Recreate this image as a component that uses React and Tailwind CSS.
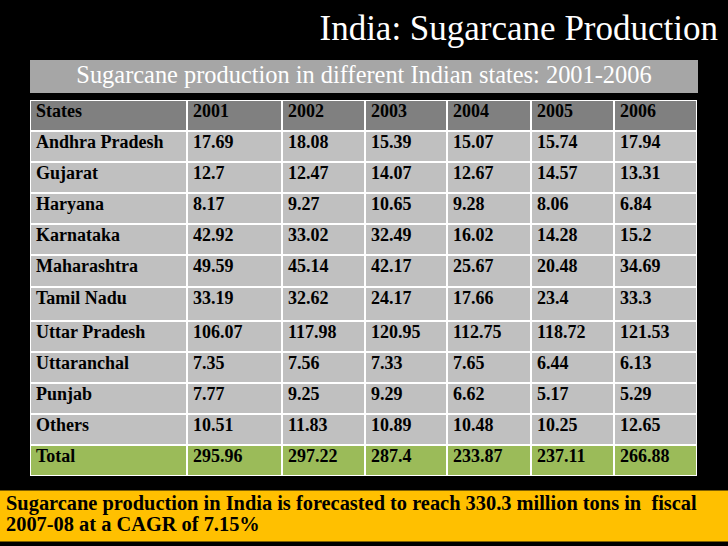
import React from 'react';

const header = ['States', '2001', '2002', '2003', '2004', '2005', '2006'];

const rows = [
  { cells: ['Andhra Pradesh', '17.69', '18.08', '15.39', '15.07', '15.74', '17.94'], h: 'h-[29px]' },
  { cells: ['Gujarat', '12.7', '12.47', '14.07', '12.67', '14.57', '13.31'], h: 'h-[29px]' },
  { cells: ['Haryana', '8.17', '9.27', '10.65', '9.28', '8.06', '6.84'], h: 'h-[29px]' },
  { cells: ['Karnataka', '42.92', '33.02', '32.49', '16.02', '14.28', '15.2'], h: 'h-[29px]' },
  { cells: ['Maharashtra', '49.59', '45.14', '42.17', '25.67', '20.48', '34.69'], h: 'h-[30px]' },
  { cells: ['Tamil Nadu', '33.19', '32.62', '24.17', '17.66', '23.4', '33.3'], h: 'h-[32px]' },
  { cells: ['Uttar Pradesh', '106.07', '117.98', '120.95', '112.75', '118.72', '121.53'], h: 'h-[29px]' },
  { cells: ['Uttaranchal', '7.35', '7.56', '7.33', '7.65', '6.44', '6.13'], h: 'h-[29px]' },
  { cells: ['Punjab', '7.77', '9.25', '9.29', '6.62', '5.17', '5.29'], h: 'h-[29px]' },
  { cells: ['Others', '10.51', '11.83', '10.89', '10.48', '10.25', '12.65'], h: 'h-[29px]' },
];

const total = ['Total', '295.96', '297.22', '287.4', '233.87', '237.11', '266.88'];

const Row = ({ cells, bg, h }) => (
  <div className={`grid grid-cols-[155px_93px_81px_80px_82px_81px_81px] gap-[2px] ${h}`}>
    {cells.map((c, i) => (
      <div key={i} className={`${bg} pl-[5px] pt-[1px] text-[18px] leading-[18px] font-bold text-black whitespace-nowrap`}>
        {c}
      </div>
    ))}
  </div>
);

export default function App() {
  return (
    <div className="w-[728px] h-[546px] bg-black overflow-hidden flex flex-col font-['Liberation_Serif','DejaVu_Serif',serif]">
      <div className="h-[60px] pt-[11px] pr-[10px] text-right text-white text-[35px] leading-none">
        India: Sugarcane Production
      </div>

      <div className="ml-[30px] w-[668px] h-[33px] bg-[#a6a6a6] text-center text-white text-[24.4px] leading-[30px]">
        Sugarcane production in different Indian states: 2001-2006
      </div>

      <div className="mt-[7px] ml-[30px] w-[667px] bg-white p-[1px] flex flex-col gap-[2px]">
        <Row cells={header} bg="bg-[#808080]" h="h-[29px]" />
        {rows.map((r) => (
          <Row key={r.cells[0]} cells={r.cells} bg="bg-[#c0c0c0]" h={r.h} />
        ))}
        <Row cells={total} bg="bg-[#9bbb59]" h="h-[29px]" />
      </div>

      <div className="mt-[14px] h-[52px] bg-[#ffc000] border-y border-[#7f6000] pl-[6px] pt-[2px] text-black font-bold text-[20.4px] leading-[21px] whitespace-nowrap">
        Sugarcane production in India is forecasted to reach 330.3 million tons in&nbsp; fiscal
        <br />
        2007-08 at a CAGR of 7.15%
      </div>
    </div>
  );
}
